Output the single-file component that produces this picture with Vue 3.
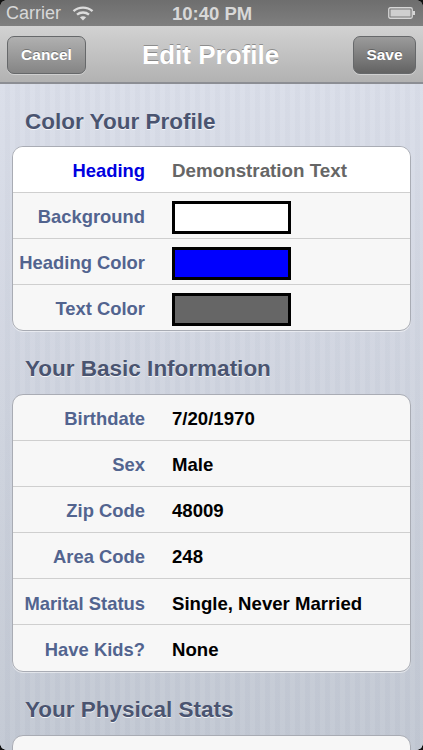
<script setup>
const colorRows = [
  { label: 'Background', color: '#ffffff' },
  { label: 'Heading Color', color: '#0000ff' },
  { label: 'Text Color', color: '#666666' },
]
const basic = [
  ['Birthdate', '7/20/1970'],
  ['Sex', 'Male'],
  ['Zip Code', '48009'],
  ['Area Code', '248'],
  ['Marital Status', 'Single, Never Married'],
  ['Have Kids?', 'None'],
]
</script>

<template>
  <div class="screen">
    <div class="status">
      <div class="status-left">
        <span>Carrier</span>
        <svg class="wifi" width="22" height="16" viewBox="0 0 22 16" fill="none" stroke="#dcdcdc" stroke-width="2.4">
          <path d="M1.5 6.2C6.8 1.4 15.2 1.4 20.5 6.2" />
          <path d="M5 9.6C8.4 6.7 13.6 6.7 17 9.6" />
          <path d="M11 15.5L7.9 12.3C9.7 11 12.3 11 14.1 12.3Z" fill="#dcdcdc" stroke="none" />
        </svg>
      </div>
      <span class="time">10:40 PM</span>
      <svg class="battery" width="27" height="12" viewBox="0 0 27 12">
        <rect x="0.75" y="0.75" width="23.5" height="10.5" rx="1.5" fill="none" stroke="#d6d6d6" stroke-width="1.3" />
        <rect x="2.5" y="2.5" width="20" height="7" fill="#cfcfcf" />
        <rect x="25" y="4" width="2" height="4" fill="#d6d6d6" />
      </svg>
    </div>

    <div class="nav">
      <button class="btn cancel">Cancel</button>
      <div class="title">Edit Profile</div>
      <button class="btn save">Save</button>
    </div>

    <div class="content">
      <h2 class="section-title">Color Your Profile</h2>
      <div class="card">
        <div class="row first">
          <div class="label heading">Heading</div>
          <div class="value demo">Demonstration Text</div>
        </div>
        <div v-for="r in colorRows" :key="r.label" class="row">
          <div class="label">{{ r.label }}</div>
          <div class="swatch" :style="{ background: r.color }"></div>
        </div>
      </div>

      <h2 class="section-title">Your Basic Information</h2>
      <div class="card basic">
        <div v-for="r in basic" :key="r[0]" class="row">
          <div class="label">{{ r[0] }}</div>
          <div class="value">{{ r[1] }}</div>
        </div>
      </div>

      <h2 class="section-title">Your Physical Stats</h2>
      <div class="card tail"></div>
    </div>

    <i class="corner tl"></i><i class="corner tr"></i><i class="corner bl"></i><i class="corner br"></i>
  </div>
</template>

<style scoped>
.screen {
  position: relative;
  width: 423px;
  height: 750px;
  overflow: hidden;
  display: flex;
  flex-direction: column;
  font-family: "Liberation Sans", Arial, sans-serif;
  background:
    repeating-linear-gradient(90deg, rgba(255,255,255,0.035) 0 5px, rgba(90,100,125,0.025) 5px 10px),
    linear-gradient(180deg, #dadee9 84px, #c2c8d3 750px);
}
.status {
  height: 26px;
  flex: none;
  display: flex;
  align-items: center;
  justify-content: space-between;
  position: relative;
  padding: 1px 6px 0;
  background: linear-gradient(180deg, #6e6e6e, #7f7f7f);
  color: #d8d8d8;
  font-size: 18px;
  box-sizing: border-box;
}
.status-left { display: flex; align-items: center; gap: 11px; }
.wifi { margin-top: -2px; }
.time {
  position: absolute;
  left: 172px;
  font-size: 18.5px;
  font-weight: bold;
}
.battery { margin-right: 2px; margin-top: -1px; }
.nav {
  position: relative;
  height: 58px;
  flex: none;
  box-sizing: border-box;
  display: flex;
  align-items: center;
  justify-content: space-between;
  padding: 1px 7px 0;
  background: linear-gradient(180deg, #d2d2d2, #b2b2b2);
  border-bottom: 2px solid #8c8e94;
}
.btn {
  height: 38px;
  border-radius: 7px;
  border: 1px solid #66686a;
  color: #fff;
  font: bold 15.5px "Liberation Sans", Arial, sans-serif;
  text-shadow: 0 -1px 0 rgba(0,0,0,0.3);
  padding: 0;
  box-shadow: 0 1px 0 rgba(255,255,255,0.35);
}
.cancel { width: 79px; background: linear-gradient(180deg, #b0b0b0, #858585); }
.save { width: 63px; background: linear-gradient(180deg, #9b9b9b, #636363); }
.title {
  position: absolute;
  left: -1px;
  right: 1px;
  top: 14px;
  text-align: center;
  pointer-events: none;
  color: #fff;
  font-size: 26px;
  font-weight: bold;
  line-height: 30px;
  text-shadow: 0 -1px 0 rgba(90,90,90,0.55);
}
.content {
  flex: 1;
  padding: 0 12px;
}
.section-title {
  margin: 0;
  height: 62px;
  box-sizing: border-box;
  padding: 25px 0 0 13px;
  font-size: 22.5px;
  line-height: 26px;
  font-weight: bold;
  color: #4a5470;
  text-shadow: 0 1px 0 rgba(255,255,255,0.75);
}
.card + .section-title { height: 63px; padding-top: 25px; }
.card {
  border: 1px solid #a9acb4;
  border-radius: 11px;
  background: #f7f7f7;
  overflow: hidden;
  box-shadow: 0 1px 0 rgba(255,255,255,0.5);
}
.tail { height: 60px; }
.row {
  height: 45px;
  box-sizing: border-box;
  padding-top: 3px;
  display: flex;
  align-items: center;
  border-top: 1px solid #cfcfcf;
  font-size: 18.6px;
  font-weight: bold;
}
.row + .row { height: 46px; }
.row:first-child { border-top: none; }
.basic .row:last-child { height: 47px; }
.basic .row:nth-child(n+5) { padding-top: 4px; }
.row.first { background: #fff; }
.label {
  width: 132px;
  flex: none;
  text-align: right;
  white-space: nowrap;
  color: #52648f;
  font-size: 18.4px;
}
.label.heading { color: #0000e0; }
.value { margin-left: 27px; color: #000; }
.value.demo { color: #666; font-size: 18.8px; }
.swatch {
  margin: 1px 0 0 27px;
  width: 119px;
  height: 33px;
  box-sizing: border-box;
  border: 3px solid #000;
}
.corner {
  position: absolute;
  width: 6px;
  height: 6px;
}
.tl { left: 0; top: 0; background: radial-gradient(circle at 100% 100%, transparent 5.5px, #111 6px); }
.tr { right: 0; top: 0; background: radial-gradient(circle at 0 100%, transparent 5.5px, #111 6px); }
.bl { left: 0; bottom: 0; background: radial-gradient(circle at 100% 0, transparent 5.5px, #111 6px); }
.br { right: 0; bottom: 0; background: radial-gradient(circle at 0 0, transparent 5.5px, #111 6px); }
</style>
